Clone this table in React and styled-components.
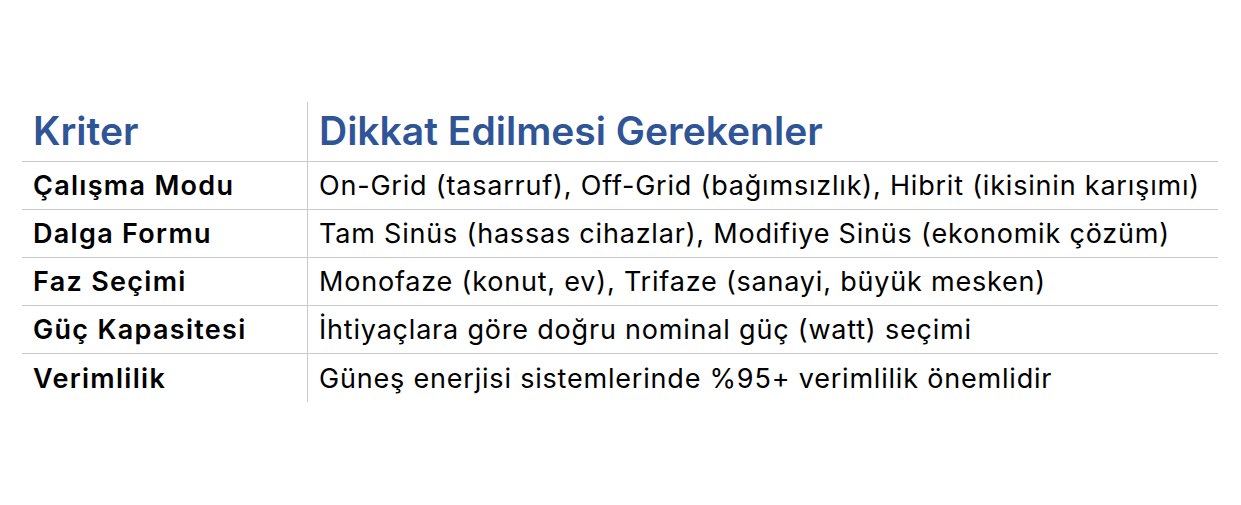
import React from 'react';
import styled, { createGlobalStyle } from 'styled-components';

const GlobalStyle = createGlobalStyle`
  body {
    margin: 0;
    background: #ffffff;
    font-family: Inter, "Noto Sans", sans-serif;
  }
`;

const rows = [
  ['Çalışma Modu', 'On-Grid (tasarruf), Off-Grid (bağımsızlık), Hibrit (ikisinin karışımı)'],
  ['Dalga Formu', 'Tam Sinüs (hassas cihazlar), Modifiye Sinüs (ekonomik çözüm)'],
  ['Faz Seçimi', 'Monofaze (konut, ev), Trifaze (sanayi, büyük mesken)'],
  ['Güç Kapasitesi', 'İhtiyaçlara göre doğru nominal güç (watt) seçimi'],
  ['Verimlilik', 'Güneş enerjisi sistemlerinde %95+ verimlilik önemlidir'],
];

const App = () => (
  <Page>
    <GlobalStyle />
    <Table>
      <HeaderRow>
        <HeadCell>Kriter</HeadCell>
        <HeadCell divider>Dikkat Edilmesi Gerekenler</HeadCell>
      </HeaderRow>
      {rows.map(([name, detail], i) => (
        <Row key={name} last={i === rows.length - 1}>
          <NameCell>{name}</NameCell>
          <DetailCell>{detail}</DetailCell>
        </Row>
      ))}
    </Table>
  </Page>
);

const Page = styled.div`
  width: 1241px;
  height: 505px;
  padding: 102px 23px 0 22px;
  box-sizing: border-box;
`;

const Table = styled.div`
  display: flex;
  flex-direction: column;
  width: 1196px;
`;

const HeaderRow = styled.div`
  display: grid;
  grid-template-columns: 285px 1fr;
  height: 60px;
  border-bottom: 1px solid #c9c9c9;
  box-sizing: border-box;
`;

const HeadCell = styled.div`
  display: flex;
  align-items: flex-end;
  padding: 0 11px 6px;
  border-left: ${(p) => (p.divider ? '1px solid #c9c9c9' : 'none')};
  color: #2f5597;
  font-size: 39px;
  font-weight: 600;
  line-height: 48px;
  white-space: nowrap;
`;

const Row = styled.div`
  display: grid;
  grid-template-columns: 285px 1fr;
  height: 48px;
  border-bottom: ${(p) => (p.last ? 'none' : '1px solid #c9c9c9')};
  box-sizing: border-box;
`;

const Cell = styled.div`
  display: flex;
  align-items: center;
  padding: 0 11px;
  color: #000000;
  font-size: 27px;
  letter-spacing: 0.8px;
  white-space: nowrap;
`;

const NameCell = styled(Cell)`
  font-weight: 600;
  letter-spacing: 1.3px;
`;

const DetailCell = styled(Cell)`
  border-left: 1px solid #c9c9c9;
  font-weight: 400;
`;

export default App;
